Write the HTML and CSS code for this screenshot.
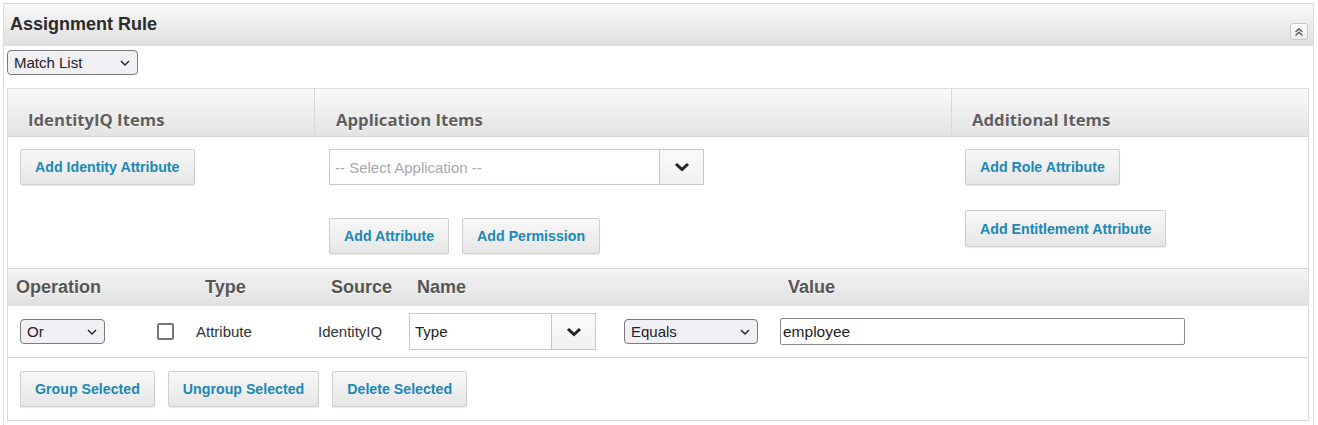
FILE: index.html
```html
<!DOCTYPE html>
<html>
<head>
<meta charset="utf-8">
<link rel="stylesheet" href="styles.css">
</head>
<body>
<div class="panel">
  <div class="panel-head">
    <span class="panel-title">Assignment Rule</span>
    <span class="collapse">
      <svg width="10" height="10" viewBox="0 0 10 10"><path d="M1.5 5 L5 1.8 L8.5 5 M1.5 8.5 L5 5.3 L8.5 8.5" fill="none" stroke="#666" stroke-width="1.6"/></svg>
    </span>
  </div>
  <div class="panel-body">
    <div class="nsel nsel-match"><span>Match List</span><svg class="caret" width="10" height="6" viewBox="0 0 10 6"><path d="M1 1 L5 5 L9 1" fill="none" stroke="#222" stroke-width="1.4"/></svg></div>

    <div class="box">
      <div class="cols-head">
        <div class="ch ch1">IdentityIQ Items</div>
        <div class="ch ch2">Application Items</div>
        <div class="ch ch3">Additional Items</div>
      </div>
      <div class="cols-body">
        <div class="cb cb1">
          <button class="btn">Add Identity Attribute</button>
        </div>
        <div class="cb cb2">
          <div class="combo combo-app">
            <span class="combo-text placeholder">-- Select Application --</span>
            <span class="combo-arrow"><svg width="16" height="10" viewBox="0 0 16 10"><path d="M2 2 L8 7.5 L14 2" fill="none" stroke="#222" stroke-width="3"/></svg></span>
          </div>
          <div class="btn-row btn-row-app">
            <button class="btn">Add Attribute</button>
            <button class="btn">Add Permission</button>
          </div>
        </div>
        <div class="cb cb3">
          <button class="btn">Add Role Attribute</button>
          <button class="btn btn-ent">Add Entitlement Attribute</button>
        </div>
      </div>

      <div class="ops-head">
        <div class="oh oh-op">Operation</div>
        <div class="oh oh-type">Type</div>
        <div class="oh oh-src">Source</div>
        <div class="oh oh-name">Name</div>
        <div class="oh oh-val">Value</div>
      </div>
      <div class="ops-row">
        <div class="oc oc-op">
          <div class="nsel nsel-or"><span>Or</span><svg class="caret" width="10" height="6" viewBox="0 0 10 6"><path d="M1 1 L5 5 L9 1" fill="none" stroke="#222" stroke-width="1.4"/></svg></div>
        </div>
        <div class="oc oc-chk"><span class="chk"></span></div>
        <div class="oc oc-type">Attribute</div>
        <div class="oc oc-src">IdentityIQ</div>
        <div class="oc oc-name">
          <div class="combo combo-name">
            <span class="combo-text">Type</span>
            <span class="combo-arrow"><svg width="16" height="10" viewBox="0 0 16 10"><path d="M2 2 L8 7.5 L14 2" fill="none" stroke="#222" stroke-width="3"/></svg></span>
          </div>
        </div>
        <div class="oc oc-cmp">
          <div class="nsel nsel-eq"><span>Equals</span><svg class="caret" width="10" height="6" viewBox="0 0 10 6"><path d="M1 1 L5 5 L9 1" fill="none" stroke="#222" stroke-width="1.4"/></svg></div>
        </div>
        <div class="oc oc-val"><div class="txt">employee</div></div>
      </div>
      <div class="ops-foot">
        <button class="btn">Group Selected</button>
        <button class="btn">Ungroup Selected</button>
        <button class="btn">Delete Selected</button>
      </div>
    </div>
  </div>
</div>
</body>
</html>
```

FILE: styles.css
```css
* { box-sizing: border-box; }
html, body { margin: 0; padding: 0; background: #fff; }
body { font-family: "Liberation Sans", Arial, sans-serif; color: #333; }

.panel {
  margin: 3px 0 0 3px;
  width: 1311px;
  height: 440px;
  border: 1px solid #dcdcdc;
  border-bottom: none;
}
.panel-head {
  height: 42px;
  background: linear-gradient(#f9f9f9, #dfdfdf);
  display: flex;
  align-items: center;
  justify-content: space-between;
  padding: 0 5px 0 6px;
}
.panel-title {
  font-size: 18px;
  font-weight: bold;
  color: #2b2b2b;
  margin-top: -2px;
}
.collapse {
  width: 18px;
  height: 17px;
  border: 1px solid #c8c8c8;
  border-radius: 3px;
  background: linear-gradient(#fff, #eee);
  display: flex;
  align-items: center;
  justify-content: center;
  align-self: flex-end;
  margin-bottom: 6px;
}
.panel-body { padding: 4px 4px 0 3px; }

.nsel {
  display: flex;
  align-items: center;
  justify-content: space-between;
  height: 25px;
  border: 1px solid #7a7a7a;
  border-radius: 4px;
  background: #efeff4;
  font-size: 15px;
  color: #222;
  padding: 0 7px 0 6px;
}
.nsel-match { width: 131px; }
.nsel-or { width: 85px; }
.nsel-eq { width: 134px; }
.caret { flex: none; }

.box {
  margin-top: 13px;
  width: 1302px;
  border: 1px solid #dcdcdc;
}
.cols-head {
  display: flex;
  height: 48px;
  background: linear-gradient(#fafafa, #e3e3e3);
  border-bottom: 1px solid #d6d6d6;
}
.ch {
  font-family: "Open Sans", "Liberation Sans", sans-serif;
  font-weight: 700;
  font-size: 16.7px;
  color: #5f5f5f;
  text-shadow: 0 1px 0 #fff;
  display: flex;
  align-items: center;
  padding-top: 14px;
}
.ch1 { width: 307px; padding-left: 20px; border-right: 1px solid #d8d8d8; }
.ch2 { width: 637px; padding-left: 21px; border-right: 1px solid #d8d8d8; }
.ch3 { flex: 1; padding-left: 20px; }

.cols-body { display: flex; height: 131px; }
.cb { padding-top: 12px; }
.cb1 { width: 307px; padding-left: 12px; }
.cb2 { width: 637px; padding-left: 14px; }
.cb3 { flex: 1; padding-left: 13px; display: flex; flex-direction: column; align-items: flex-start; gap: 25px; }

.btn {
  display: block;
  height: 36px;
  padding: 0 14px;
  border: 1px solid #cfcfcf;
  border-radius: 2px;
  background: linear-gradient(#f8f8f8, #e6e6e6);
  box-shadow: 0 1px 1px rgba(0,0,0,0.08);
  font-family: "Liberation Sans", Arial, sans-serif;
  font-weight: bold;
  font-size: 14.2px;
  color: #1b88b6;
  white-space: nowrap;
}
.btn-ent { height: 37px; }

.combo {
  display: flex;
  border: 1px solid #c6c6d6;
  background: #fff;
}
.combo-app { width: 375px; height: 36px; }
.combo-name { width: 187px; height: 37px; }
.combo-text {
  flex: 1;
  display: flex;
  align-items: center;
  padding-left: 5px;
  font-size: 15px;
  color: #222;
}
.combo-text.placeholder { color: #a8a8a8; }
.combo-arrow {
  width: 44px;
  display: flex;
  align-items: center;
  justify-content: center;
  border-left: 1px solid #c6c6d6;
  background: linear-gradient(#fbfbfb, #f0f0f0);
}
.btn-row { display: flex; gap: 13px; }
.btn-row-app { margin-top: 33px; }

.ops-head {
  display: flex;
  align-items: center;
  height: 38px;
  border-top: 1px solid #d6d6d6;
  background: linear-gradient(#f4f4f4, #e0e0e0);
  font-weight: bold;
  font-size: 18px;
  color: #555;
  text-shadow: 0 1px 0 #fff;
}
.oh-op { width: 197px; padding-left: 8px; }
.oh-type { width: 126px; }
.oh-src { width: 86px; }
.oh-name { width: 371px; }
.oh-val { flex: 1; }

.ops-row {
  display: flex;
  align-items: center;
  height: 52px;
  border-bottom: 1px solid #d6d6d6;
  font-size: 15px;
  color: #333;
}
.oc { display: flex; align-items: center; }
.oc-op { width: 147px; padding-left: 12px; }
.oc-chk { width: 41px; padding-left: 2px; }
.chk {
  width: 17px;
  height: 17px;
  border: 2px solid #777;
  border-radius: 2px;
  background: #fff;
}
.oc-type { width: 122px; }
.oc-src { width: 91px; }
.oc-name { width: 215px; }
.oc-cmp { width: 156px; }
.oc-val { flex: 1; }
.txt {
  width: 405px;
  height: 27px;
  border: 1px solid #8a8a8a;
  border-radius: 2px;
  display: flex;
  align-items: center;
  padding-left: 2px;
  font-size: 15.5px;
  color: #222;
}

.ops-foot {
  display: flex;
  gap: 13px;
  padding: 13px 0 13px 12px;
}
```
